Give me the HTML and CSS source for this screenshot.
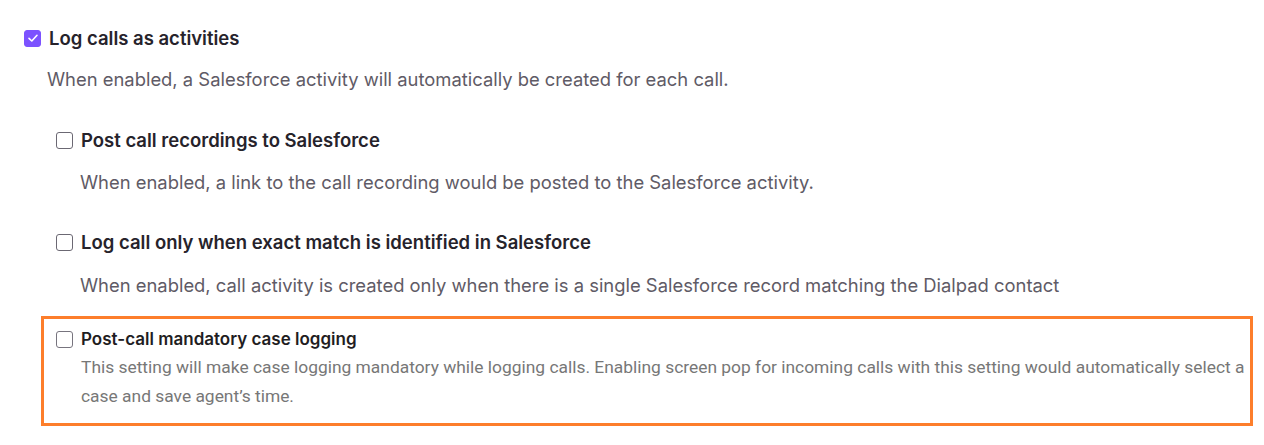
FILE: index.html
```html
<!DOCTYPE html>
<html>
<head>
<meta charset="utf-8">
<link rel="stylesheet" href="styles.css">
</head>
<body>
<div class="settings">
  <div class="item">
    <div class="row">
      <span class="cb cb-checked"><svg viewBox="0 0 18 18" width="18" height="18"><path d="M5 9.3 L7.8 12 L13 6.3" fill="none" stroke="#fff" stroke-width="1.6" stroke-linecap="round" stroke-linejoin="round"/></svg></span>
      <span class="title">Log calls as activities</span>
    </div>
    <p class="desc">When enabled, a Salesforce activity will automatically be created for each call.</p>
  </div>
  <div class="sub">
    <div class="item">
      <div class="row">
        <span class="cb"></span>
        <span class="title">Post call recordings to Salesforce</span>
      </div>
      <p class="desc">When enabled, a link to the call recording would be posted to the Salesforce activity.</p>
    </div>
    <div class="item">
      <div class="row">
        <span class="cb"></span>
        <span class="title">Log call only when exact match is identified in Salesforce</span>
      </div>
      <p class="desc">When enabled, call activity is created only when there is a single Salesforce record matching the Dialpad contact</p>
    </div>
  </div>
  <div class="highlight">
    <div class="row row-small">
      <span class="cb cb-small"></span>
      <span class="title title-small">Post-call mandatory case logging</span>
    </div>
    <p class="desc-small">This setting will make case logging mandatory while logging calls. Enabling screen pop for incoming calls with this setting would automatically select a case and save agent’s time.</p>
  </div>
</div>
</body>
</html>
```
FILE: styles.css
```css
* { box-sizing: border-box; }
body {
  margin: 0;
  background: #fff;
  font-family: Inter, "Noto Sans", sans-serif;
  color: #26232b;
}
.settings {
  padding: 26px 11px 0 24px;
  display: flex;
  flex-direction: column;
}
.item { display: flex; flex-direction: column; }
.row {
  display: flex;
  align-items: center;
  gap: 8px;
  height: 24px;
}
.cb {
  width: 17px;
  height: 17px;
  border: 1.5px solid #6b6873;
  border-radius: 3px;
  flex: none;
  display: flex;
  align-items: center;
  justify-content: center;
}
.cb-checked {
  background: #7c52ff;
  border-color: #7c52ff;
}
.cb-checked svg { flex: none; }
.title {
  font-size: 18.5px;
  font-weight: 600;
  line-height: 24px;
  color: #26232b;
}
.desc {
  margin: 17px 0 0 23px;
  font-size: 18.4px;
  line-height: 24px;
  color: #5f5b66;
}
.sub {
  padding-left: 32px;
  display: flex;
  flex-direction: column;
}
.sub .item { margin-top: 37px; }
.sub .item + .item { margin-top: 36px; }
.sub .desc { margin-top: 18px; margin-left: 24px; }
.sub .item + .item .desc { margin-top: 19px; }
.highlight {
  margin-top: 19px;
  margin-left: 17px;
  border: 3px solid #fd7e2b;
  padding: 9px 1px 12px 12px;
}
.row-small { height: 22px; gap: 8px; }
.cb-small {
  width: 17px;
  height: 17px;
  border-color: #77747e;
}
.title-small {
  font-size: 17px;
  line-height: 22px;
  font-weight: 600;
  color: #1f1d22;
}
.desc-small {
  margin: 3px 0 0 25px;
  font-family: Roboto, "Noto Sans", sans-serif;
  font-size: 17.4px;
  line-height: 29px;
  color: #777777;
}
```
